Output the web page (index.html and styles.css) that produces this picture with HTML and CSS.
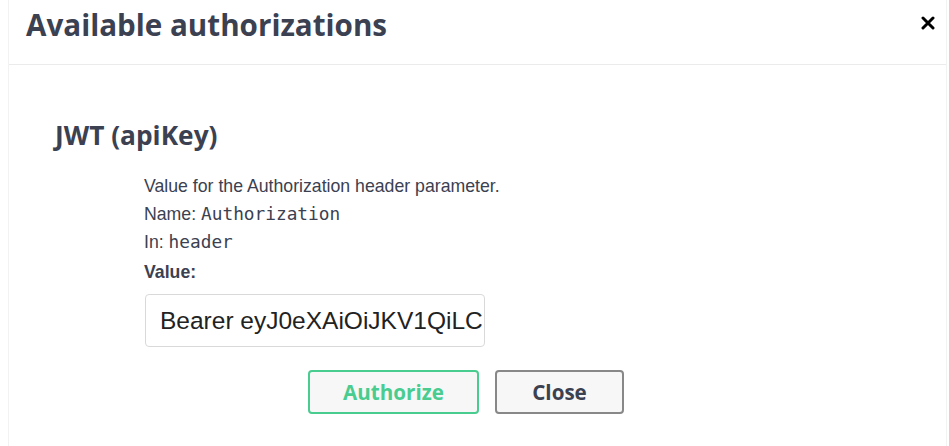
FILE: index.html
```html
<!DOCTYPE html>
<html lang="en">
<head>
<meta charset="utf-8">
<title>Available authorizations</title>
<link rel="stylesheet" href="styles.css">
</head>
<body>
<div class="modal">
  <div class="modal-header">
    <h3 class="modal-title">Available authorizations</h3>
    <button class="close-x" type="button" aria-label="Close">
      <svg width="14" height="14" viewBox="0 0 14 14"><path d="M2 2 L12 12 M12 2 L2 12" stroke="#000" stroke-width="3" stroke-linecap="round"/></svg>
    </button>
  </div>
  <div class="modal-content">
    <h4 class="scheme-title">JWT (apiKey)</h4>
    <div class="scheme-details">
      <p class="line">Value for the Authorization header parameter.</p>
      <p class="line">Name: <code class="mono">Authorization</code></p>
      <p class="line">In: <code class="mono">header</code></p>
      <label class="value-label" for="apikey">Value:</label>
      <input id="apikey" class="value-input" type="text" value="Bearer eyJ0eXAiOiJKV1QiLCJhbGciOiJIUzI1NiJ9">
    </div>
    <div class="btn-row">
      <button class="btn btn-authorize" type="button">Authorize</button>
      <button class="btn btn-close" type="button">Close</button>
    </div>
  </div>
</div>
</body>
</html>
```
FILE: styles.css
```css
html, body {
  margin: 0;
  padding: 0;
  background: #ffffff;
}
.modal {
  margin: 0 2px 0 8px;
  height: 446px;
  border-left: 1px solid #f2f2f2;
  border-right: 1px solid #f2f2f2;
  box-sizing: border-box;
}
.modal-header {
  display: flex;
  justify-content: space-between;
  align-items: flex-start;
  height: 65px;
  box-sizing: border-box;
  border-bottom: 1px solid #ebebeb;
  padding: 4px 0 0 17px;
}
.modal-title {
  margin: 0;
  font-family: "Open Sans", sans-serif;
  font-weight: 700;
  font-size: 29.6px;
  line-height: 42px;
  color: #3b4151;
}
.close-x {
  border: none;
  background: none;
  padding: 0;
  margin: 11px 10px 0 0;
  width: 16px;
  height: 16px;
  display: flex;
  align-items: center;
  justify-content: center;
}
.modal-content {
  padding: 53px 0 0 46px;
}
.scheme-title {
  margin: 0;
  font-family: "Open Sans", sans-serif;
  font-weight: 700;
  font-size: 26.3px;
  line-height: 34px;
  color: #3b4151;
}
.scheme-details {
  margin: 20px 0 0 89px;
  display: flex;
  flex-direction: column;
  align-items: flex-start;
}
.line {
  margin: 0;
  font-family: "Liberation Sans", Arial, sans-serif;
  font-size: 17.7px;
  line-height: 28px;
  color: #3b4151;
}
.mono {
  font-family: "DejaVu Sans Mono", monospace;
  font-size: 17.8px;
  color: #3b4151;
}
.value-label {
  margin-top: 2px;
  font-family: "Liberation Sans", Arial, sans-serif;
  font-weight: 700;
  font-size: 17.7px;
  line-height: 28px;
  color: #3b4151;
}
.value-input {
  margin: 8px 0 0 1px;
  width: 340px;
  height: 53px;
  box-sizing: border-box;
  border: 1px solid #d9d9d9;
  border-radius: 4px;
  padding: 0 2px 0 14px;
  font-family: "Liberation Sans", Arial, sans-serif;
  font-size: 24.5px;
  color: #222222;
  background: #ffffff;
  outline: none;
}
.btn-row {
  display: flex;
  gap: 16px;
  margin-top: 23px;
  padding-left: 253px;
}
.btn {
  height: 44px;
  box-sizing: border-box;
  border-radius: 4px;
  border: 2px solid #888888;
  background: #f7f7f7;
  font-family: "Open Sans", sans-serif;
  font-weight: 700;
  font-size: 20.6px;
  color: #3b4151;
  padding: 0;
}
.btn-authorize {
  width: 171px;
  border-color: #49cc90;
  color: #49cc90;
}
.btn-close {
  width: 129px;
}
```
